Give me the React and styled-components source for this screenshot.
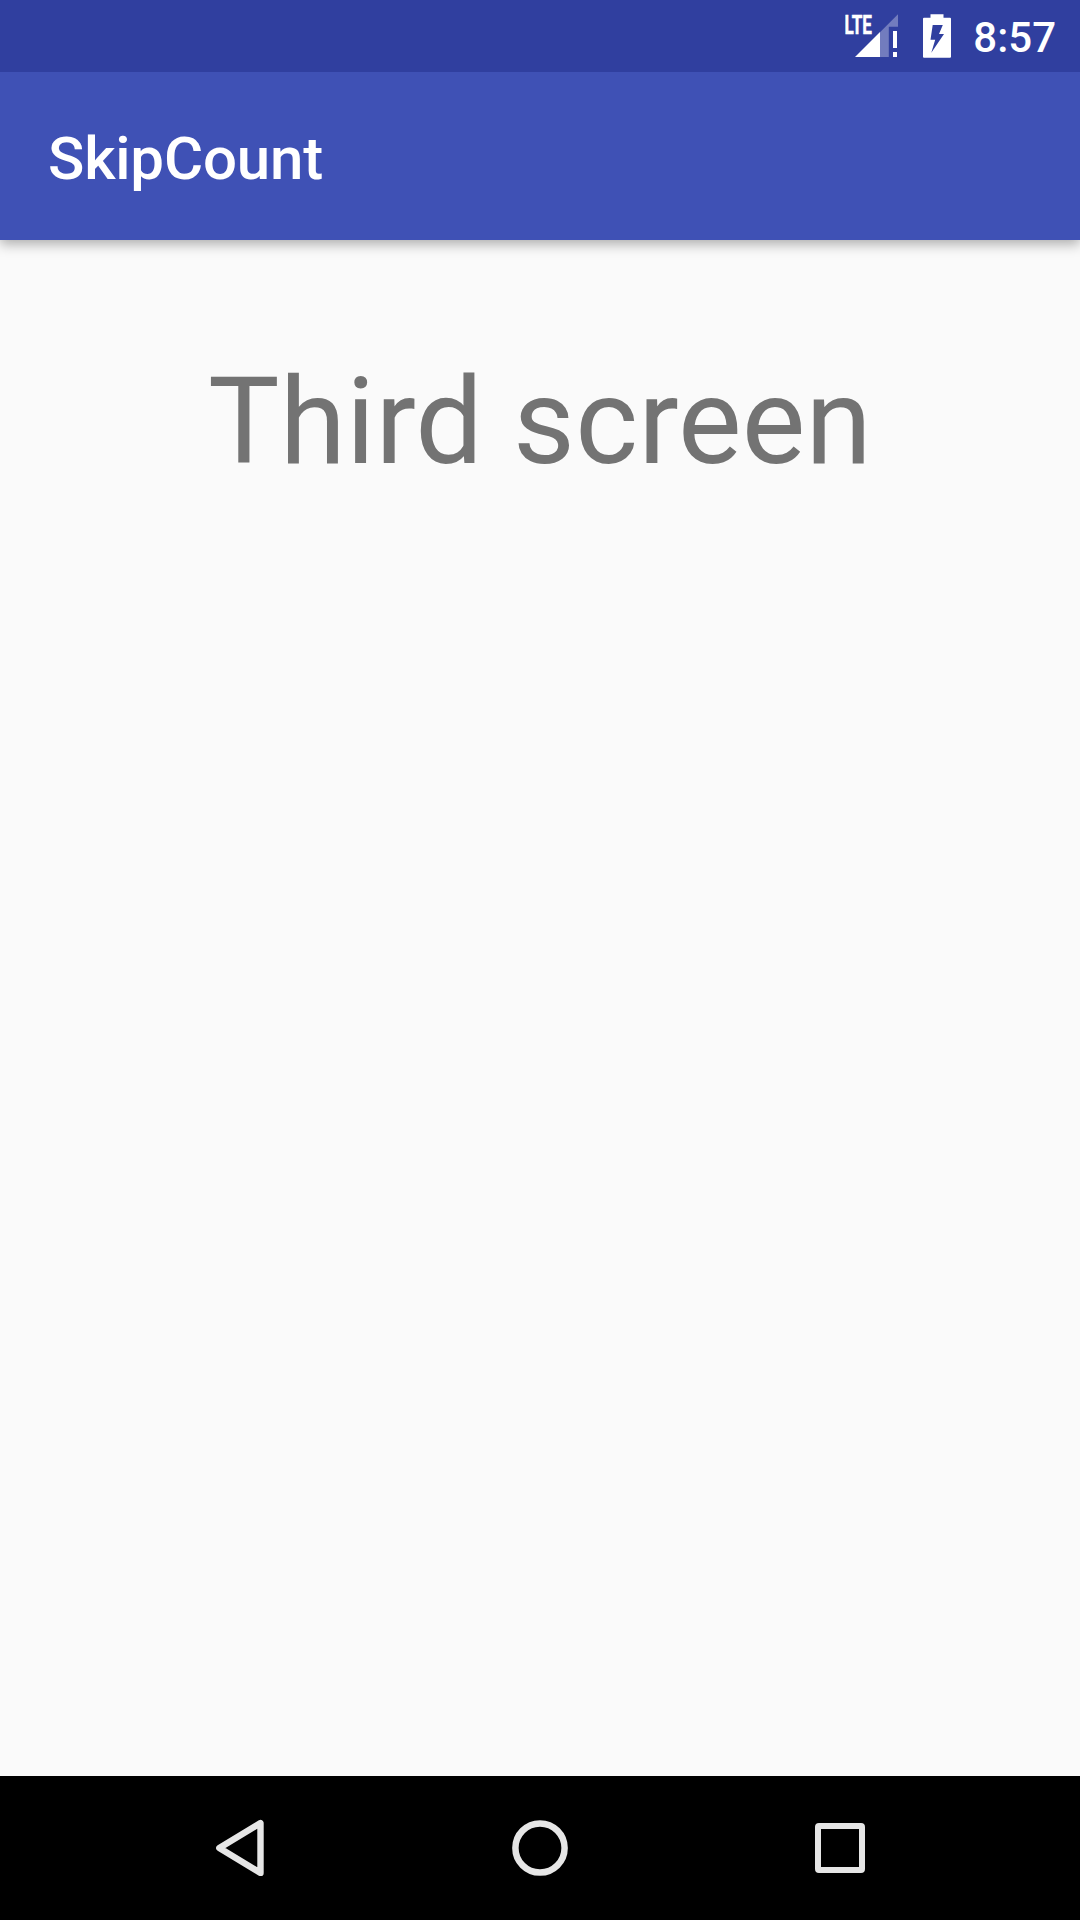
import React from "react";
import styled, { createGlobalStyle } from "styled-components";

const GlobalStyle = createGlobalStyle`
  *, *::before, *::after { box-sizing: border-box; }
  body { margin: 0; background: #fafafa; }
`;

const Screen = styled.div`
  display: flex;
  flex-direction: column;
  width: 1080px;
  height: 1920px;
  overflow: hidden;
  background: #fafafa;
  font-family: Roboto, sans-serif;
`;

const StatusBar = styled.header`
  position: relative;
  z-index: 1;
  display: flex;
  flex: none;
  align-items: center;
  justify-content: flex-end;
  height: 72px;
  padding-right: 24px;
  background: #303f9f;
  color: #fff;
`;

const StatusIcon = styled.svg`
  display: block;
  flex: none;
  width: ${(p) => p.$width}px;
  height: 72px;
  margin-right: ${(p) => p.$gap}px;
`;

const NetworkLabel = styled.text`
  font: 700 25.5px Roboto, sans-serif;
  fill: #fff;
  stroke: #fff;
  stroke-width: 0.5px;
`;

const Clock = styled.time`
  font-size: 42px;
  font-weight: 500;
  line-height: 72px;
  padding-top: 4px;
`;

const AppBar = styled.div`
  display: flex;
  flex: none;
  align-items: center;
  height: 168px;
  padding: 5px 48px 0;
  background: #3f51b5;
  box-shadow: 0 4px 12px rgba(0, 0, 0, 0.32);
`;

const AppTitle = styled.h1`
  margin: 0;
  color: #fff;
  font-size: 60px;
  font-weight: 500;
  line-height: 70px;
  letter-spacing: -0.18px;
`;

const Content = styled.main`
  display: flex;
  flex: 1;
  justify-content: center;
  align-items: flex-start;
  padding-top: 112px;
`;

const Heading = styled.p`
  margin: 0;
  color: #737373;
  font-size: 120px;
  line-height: 141px;
  letter-spacing: 0.2px;
  white-space: nowrap;
`;

const NavBar = styled.nav`
  display: flex;
  flex: none;
  justify-content: center;
  height: 144px;
  background: #000;
`;

const NavButton = styled.button`
  display: flex;
  align-items: center;
  justify-content: center;
  width: 300px;
  height: 144px;
  padding: 0;
  border: 0;
  background: transparent;
`;

const NavIcon = styled.svg`
  display: block;
  width: 84px;
  height: 84px;
  fill: none;
  stroke: #e6e6e6;
  stroke-width: ${(p) => p.$stroke};
  stroke-linejoin: round;
`;

export default function App() {
  return (
    <>
      <GlobalStyle />
      <Screen>
        <StatusBar>
          <StatusIcon $width={54} $gap={24} viewBox="845 0 54 72">
            <path fill="#fff" fillOpacity="0.32" d="M898 14.2V26.7h-9.2V57H880V32.2z" />
            <path fill="#fff" d="M855 57l25-25v25zM893 31h4v17h-4zM893 52h4v5h-4z" />
            <NetworkLabel x="844.4" y="33.6" textLength="27.6" lengthAdjust="spacingAndGlyphs">
              LTE
            </NetworkLabel>
          </StatusIcon>
          <StatusIcon $width={28} $gap={22} viewBox="923 0 28 72">
            <path
              fill="#fff"
              fillRule="evenodd"
              d="M930.5 14.2h13V17.8h6.5q1 0 1 1v37.9q0 1-1 1h-26q-1 0-1-1V18.8q0-1 1-1h6.5zM932.7 25l-2.2 14.7h4.7l-3.9 13L944 34h-5l3.8-9z"
            />
          </StatusIcon>
          <Clock>8:57</Clock>
        </StatusBar>
        <AppBar>
          <AppTitle>SkipCount</AppTitle>
        </AppBar>
        <Content>
          <Heading>Third screen</Heading>
        </Content>
        <NavBar>
          <NavButton aria-label="Back">
            <NavIcon $stroke={6.4} viewBox="0 0 84 84">
              <path d="M62.5 17.1v49.8L21.3 42z" />
            </NavIcon>
          </NavButton>
          <NavButton aria-label="Home">
            <NavIcon $stroke={6.5} viewBox="0 0 84 84">
              <circle cx="42" cy="42" r="24.6" />
            </NavIcon>
          </NavButton>
          <NavButton aria-label="Overview">
            <NavIcon $stroke={6} viewBox="0 0 84 84">
              <rect x="20" y="20" width="44" height="44" rx="1" />
            </NavIcon>
          </NavButton>
        </NavBar>
      </Screen>
    </>
  );
}
